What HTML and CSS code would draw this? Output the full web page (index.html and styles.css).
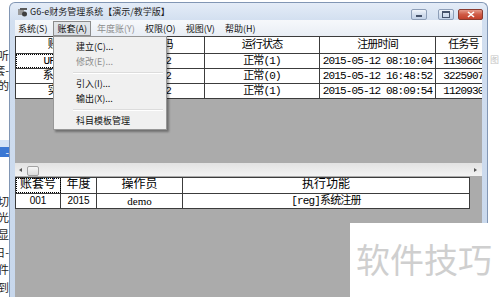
FILE: index.html
```html
<!DOCTYPE html>
<html lang="zh-CN">
    <head>
        <meta charset="UTF-8">
        <title>G6-e财务管理系统</title>
        <link rel="stylesheet" href="styles.css">
    </head>
    <body>
        <div class="screen">
            <!-- 窗口后面的文档 -->
            <div class="bgleft">
                <div class="frag f1"><span>数据分析听</span></div>
                <div class="frag f2"><span>建账套-</span></div>
                <div class="frag f3"><span>系统的</span></div>
                <div class="selbar"><span>-</span></div>
                <div class="frag f4"><span>切</span></div>
                <div class="frag f5"><span>光</span></div>
                <div class="frag f6"><span>明显</span></div>
                <div class="frag f7"><span>日-</span></div>
                <div class="frag f8"><span>文件</span></div>
                <div class="frag f9"><span>到</span></div>
            </div>

            <div class="window">
                <div class="titlebar">
                    <svg class="appicon" viewBox="0 0 11 10" width="11" height="10">
                        <path d="M1 2h6v6H1z" fill="#9a9a9a"/>
                        <path d="M3 1h7v2H3z" fill="#5a5a5a"/>
                        <circle cx="7.5" cy="7" r="2.5" fill="#3f3f3f"/>
                    </svg>
                    <span class="title">G6-e财务管理系统【演示/教学版】</span>
                    <div class="winbtns">
                        <span class="wbtn min"><i></i></span>
                        <span class="wbtn max"><i></i></span>
                        <span class="wbtn close">
                            <svg viewBox="0 0 8 7" width="8" height="7"><path d="M1 1l6 5M7 1L1 6" stroke="#fff" stroke-width="1.6"/></svg>
                        </span>
                    </div>
                </div>

                <ul class="menubar">
                    <li>系统(S)</li>
                    <li class="open">账套(A)</li>
                    <li class="off">年度账(Y)</li>
                    <li>权限(O)</li>
                    <li>视图(V)</li>
                    <li>帮助(H)</li>
                </ul>

                <div class="client">
                    <div class="grid top">
                        <div class="row head">
                            <div class="c t1">账套名称</div>
                            <div class="c t2">密码</div>
                            <div class="c t3">运行状态</div>
                            <div class="c t4">注册时间</div>
                            <div class="c t5">任务号</div>
                        </div>
                        <div class="row">
                            <div class="c t1 focus">UFIDA演示</div>
                            <div class="c t2">002</div>
                            <div class="c t3">正常(1)</div>
                            <div class="c t4">2015-05-12 08:10:04</div>
                            <div class="c t5">1130666</div>
                        </div>
                        <div class="row">
                            <div class="c t1">系统演示账</div>
                            <div class="c t2">992</div>
                            <div class="c t3">正常(0)</div>
                            <div class="c t4">2015-05-12 16:48:52</div>
                            <div class="c t5">3225907</div>
                        </div>
                        <div class="row">
                            <div class="c t1">实验账套</div>
                            <div class="c t2">012</div>
                            <div class="c t3">正常(1)</div>
                            <div class="c t4">2015-05-12 08:09:54</div>
                            <div class="c t5">1120930</div>
                        </div>
                    </div>

                    <div class="hscroll">
                        <span class="arrow left"></span>
                        <span class="thumb"></span>
                        <span class="arrow right"></span>
                    </div>

                    <div class="grid bottom">
                        <div class="row head">
                            <div class="c b1 focus">账套号</div>
                            <div class="c b2">年度</div>
                            <div class="c b3">操作员</div>
                            <div class="c b4">执行功能</div>
                        </div>
                        <div class="row">
                            <div class="c b1 sans">001</div>
                            <div class="c b2 sans">2015</div>
                            <div class="c b3 serif">demo</div>
                            <div class="c b4">[reg]系统注册</div>
                        </div>
                    </div>

                    <ul class="dropdown">
                        <li>建立(C)...</li>
                        <li class="off">修改(E)...</li>
                        <li class="sep"></li>
                        <li>引入(I)...</li>
                        <li>输出(X)...</li>
                        <li class="sep"></li>
                        <li>科目模板管理</li>
                    </ul>
                </div>
            </div>

            <div class="bgright"><span>图</span></div>
        </div>

        <div class="watermark">软件技巧</div>
    </body>
</html>
```

FILE: styles.css
```css
*{
    padding: 0;
    margin: 0;
}
body{
    width: 500px;
    height: 297px;
    overflow: hidden;
    position: relative;
    background: #fff;
    font-family: "Noto Sans CJK SC", sans-serif;
}
.screen{
    display: flex;
    height: 297px;
}

/* 左边露出的文档 */
.bgleft{
    width: 9px;
    flex: none;
    overflow: hidden;
    font-size: 11px;
    color: #222;
}
.frag{
    height: 12px;
    line-height: 12px;
    display: flex;
    justify-content: flex-end;
    white-space: nowrap;
}
.f1{ margin-top: 49px; }
.f2, .f3{ margin-top: 3px; }
.f4{ margin-top: 38px; }
.f5{ margin-top: 4px; }
.f6{ margin-top: 5px; }
.f7{ margin-top: 6px; }
.f8{ margin-top: 5px; }
.f9{ margin-top: 6px; }
.selbar{
    margin-top: 49px;
    height: 10px;
    border-top: 7px solid #d3e3f7;
    background: #3b78d4;
    color: #fff;
    line-height: 9px;
    font-size: 10px;
    text-align: right;
}

.bgright{
    flex: 1;
    font-size: 9px;
    color: #c4c4c4;
    padding: 53px 0 0 2px;
}

/* 窗口 */
.window{
    flex: none;
    width: 479px;
    height: 295px;
    margin-top: 2px;
    box-sizing: border-box;
    border: 1px solid #8196b4;
    border-bottom: none;
    border-radius: 6px 6px 0 0;
    background: linear-gradient(#e4ecf7, #d2dff0 18px, #c7d7ec);
    padding: 0 5px;
    display: flex;
    flex-direction: column;
}
.titlebar{
    height: 17px;
    display: flex;
    align-items: flex-end;
}
.appicon{
    margin: 0 2px 3px 2px;
}
.title{
    font-size: 9px;
    line-height: 12px;
    margin-bottom: 2px;
    color: #1e1e1e;
    white-space: nowrap;
}
.winbtns{
    margin-left: auto;
    margin-right: -1px;
    display: flex;
    height: 11px;
}
.wbtn{
    box-sizing: border-box;
    height: 11px;
    border: 1px solid #8e9fb8;
    border-radius: 2px;
    background: linear-gradient(#f1f5fb, #d3deed 50%, #c3d2e8);
    display: flex;
    align-items: center;
    justify-content: center;
}
.min{
    width: 16px;
}
.min i{
    display: block;
    width: 6px;
    height: 2px;
    margin-top: 3px;
    background: #45526a;
}
.max{
    width: 16px;
    margin-left: 11px;
}
.max i{
    display: block;
    width: 6px;
    height: 4px;
    border: 1px solid #45526a;
    border-top-width: 2px;
}
.close{
    width: 25px;
    margin-left: 4px;
    border-color: #8a3b2f;
    background: linear-gradient(#e59a8a, #cf5a45 50%, #c2412c);
}

/* 菜单栏 */
.menubar{
    list-style: none;
    height: 16px;
    display: flex;
    align-items: center;
    background: linear-gradient(#f6f8fb, #e9eef5);
    font-size: 9px;
    color: #111;
}
.menubar li{
    line-height: 13px;
    padding: 0 3px;
    border: 1px solid transparent;
    margin-right: 2px;
    white-space: nowrap;
}
.menubar li:first-child{
    margin-left: -1px;
}
.menubar li.open{
    border-color: #8c8c8c;
    background: linear-gradient(#e3e6ea, #d9dde3);
}
.menubar li.off{
    color: #8e8e8e;
}

/* 工作区 */
.client{
    flex: 1;
    background: #ababab;
    position: relative;
    overflow: hidden;
    font-family: "Liberation Mono", "Noto Sans CJK SC", monospace;
    font-size: 11px;
    letter-spacing: -0.85px;
    color: #000;
}
.grid{
    background: #fff;
    border-top: 1px solid #3c3c3c;
    border-left: 1px solid #3c3c3c;
}
.top{
    width: 476px;
}
.bottom{
    width: 454px;
    margin-top: 1px;
}
.row{
    display: flex;
    height: 14px;
    border-bottom: 1px solid #3c3c3c;
}
.row.head{
    height: 16px;
}
.bottom .row.head{
    height: 15px;
    font-size: 12px;
    letter-spacing: 0;
}
.c{
    flex: none;
    box-sizing: border-box;
    border-right: 1px solid #3c3c3c;
    text-align: center;
    line-height: 14px;
    white-space: nowrap;
    overflow: hidden;
}
.head .c{
    line-height: 16px;
}
.bottom .head .c{
    line-height: 15px;
}
.focus{
    outline: 1px dotted #000;
    outline-offset: -1px;
}
.t1{ width: 105px; }
.t2{ width: 84px; }
.t3{ width: 115px; }
.t4{ width: 116px; }
.t5{ width: 56px; }
.b1{ width: 45px; }
.b2{ width: 36px; }
.b3{ width: 86px; }
.b4{ width: 287px; }
.sans{
    font-family: "Liberation Sans", sans-serif;
    font-size: 10px;
    letter-spacing: 0;
}
.serif{
    font-family: "Liberation Serif", serif;
    font-size: 11px;
    letter-spacing: 0;
}

/* 横向滚动条 */
.hscroll{
    height: 13px;
    margin-top: 64px;
    background: linear-gradient(#e2e2e2, #f3f3f3);
    display: flex;
    align-items: center;
}
.arrow{
    width: 0;
    height: 0;
    border-top: 2.5px solid transparent;
    border-bottom: 2.5px solid transparent;
}
.arrow.left{
    margin-left: 4px;
    border-right: 3px solid #555;
}
.arrow.right{
    margin-left: auto;
    margin-right: 5px;
    border-left: 3px solid #555;
}
.thumb{
    width: 12px;
    height: 10px;
    margin: 2px 0 0 5px;
    box-sizing: border-box;
    border: 1px solid #a2a2a2;
    border-radius: 2px;
    background: linear-gradient(#f6f6f6, #dcdcdc);
}

/* 账套下拉菜单 */
.dropdown{
    position: absolute;
    left: 38px;
    top: 0;
    width: 114px;
    box-sizing: border-box;
    border: 1px solid #979797;
    background: #f0f0f0;
    box-shadow: 2px 2px 2px rgba(0, 0, 0, .35);
    padding: 2px 0 1px;
    list-style: none;
    font-family: "Noto Sans CJK SC", sans-serif;
    font-size: 9px;
    letter-spacing: 0;
    color: #111;
}
.dropdown li{
    height: 15px;
    line-height: 15px;
    padding-left: 22px;
}
.dropdown li.off{
    color: #8d8d8d;
}
.dropdown li.sep{
    height: 1px;
    margin: 3px 3px 2px 19px;
    padding: 0;
    background: #dcdcdc;
    border-bottom: 1px solid #fff;
}

/* 水印 */
.watermark{
    position: absolute;
    left: 350px;
    top: 223px;
    width: 150px;
    height: 74px;
    box-sizing: border-box;
    padding-left: 6px;
    background: #fff;
    color: #cfcfcf;
    font-size: 34px;
    line-height: 72px;
    white-space: nowrap;
}
```
